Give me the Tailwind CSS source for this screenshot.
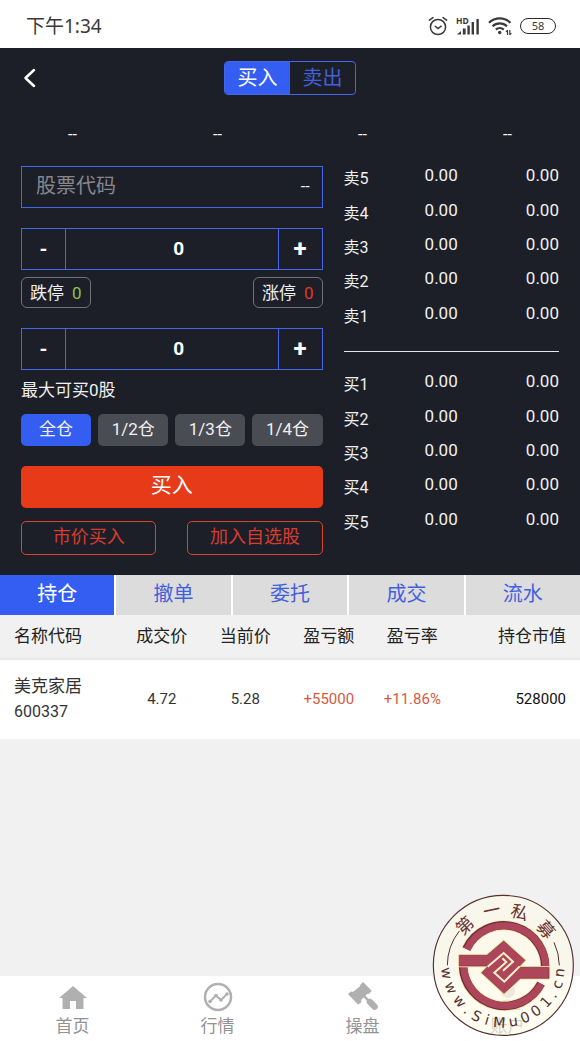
<!DOCTYPE html>
<html lang="zh-CN">
<head>
<meta charset="utf-8">
<meta name="viewport" content="width=device-width, initial-scale=1">
<title>买入</title>
<script src="https://cdn.jsdelivr.net/npm/@tailwindcss/browser@4"></script>
</head>
<body class="relative flex min-h-screen flex-col bg-[#f1f1f1] font-['Roboto','Noto_Sans_CJK_SC',sans-serif] text-[17px] text-[#333]">

<!-- Status bar -->
<header class="flex h-12 items-center justify-between bg-white pt-1 pr-6 pl-[26px] font-['Noto_Sans','Noto_Sans_CJK_SC',sans-serif] text-[#3a3a3a]">
  <span class="text-[19px]">下午1:34</span>
  <div class="flex items-center gap-2">
    <svg class="size-5" viewBox="0 0 20 20" fill="none" stroke="#3a3a3a" stroke-width="1.5" stroke-linecap="round" aria-hidden="true">
      <circle cx="10" cy="11" r="7.6"/><path d="M7.2 10.2 10 12.6l3.2-2.4M1.4 4.2 5 1.6M15 1.6l3.6 2.6"/>
    </svg>
    <svg class="h-5 w-6" viewBox="0 0 24 20" fill="#3a3a3a" aria-hidden="true">
      <text x="0" y="7.5" font-size="8.5" font-weight="700">HD</text>
      <path d="M1 18.500l4-3.500v3.500zM6.800 12.500h2.800v6H6.800zM11.400 9.500h2.400v9h-2.400zM15.600 6h2.400v12.500h-2.400zM20.400 3h2.400v15.500h-2.400z"/>
    </svg>
    <svg class="h-5 w-6" viewBox="0 0 24 20" fill="none" stroke="#3a3a3a" stroke-width="2.200" aria-hidden="true">
      <path d="M1 6.800a15.500 15.500 0 0 1 21.500 0M4.500 10.300a10.500 10.500 0 0 1 14.500 0M7.800 13.600a6 6 0 0 1 8 0"/>
      <circle cx="11.700" cy="16.500" r="1.700" fill="#3a3a3a" stroke="none"/>
      <path d="M19.500 14v5m-1.500-3 1.500-2M21.800 19v-5m1.500 3-1.500 2" stroke-width="1.200"/>
    </svg>
    <span class="flex h-4 w-9 items-center justify-center rounded-full border border-[#2a2a2a] text-[11px]">58</span>
  </div>
</header>

<main class="flex flex-col">
  <section class="bg-[#1d1f28] pb-5 text-[#f0f0f0]">
    <div class="grid grid-cols-[1fr_auto_1fr] items-center px-[21px] pt-[13px]">
      <button type="button" aria-label="返回" class="flex size-6 items-center">
        <svg class="h-5 w-4" viewBox="0 0 16 20" fill="none" stroke="#fff" stroke-width="2.500" stroke-linecap="round" stroke-linejoin="round"><path d="M13 2 4.500 10l8.500 8"/></svg>
      </button>
      <div class="flex h-[34px] w-[132px] overflow-hidden rounded-[4px] border border-[#4466ea] text-xl">
        <button type="button" class="flex flex-1 items-center justify-center bg-[#345df2] pb-px text-white">买入</button>
        <button type="button" class="flex flex-1 items-center justify-center pb-px text-[#4360dc]">卖出</button>
      </div>
    </div>

    <div class="mt-5 grid h-10 grid-cols-4 items-center text-center text-base text-white">
      <span>--</span><span>--</span><span>--</span><span>--</span>
    </div>

    <div class="mt-[3px] grid grid-cols-[minmax(0,7fr)_minmax(0,5fr)] gap-[21px] px-[21px]">
      <form class="min-w-0 pt-2">
        <label class="flex h-[42px] items-center border border-[#4466ea] pr-3 pl-[14px]">
          <input type="text" aria-label="股票代码" placeholder="股票代码" class="w-0 min-w-0 flex-1 bg-transparent pb-[2px] text-xl outline-none placeholder:text-[#85878c]">
          <span class="text-base">--</span>
        </label>

        <div class="mt-5 flex h-[42px] border border-[#4466ea] font-bold text-white">
          <button type="button" aria-label="减少价格" class="w-11 shrink-0 border-r border-[#4466ea] text-xl">-</button>
          <input type="text" inputmode="decimal" aria-label="价格" value="0" class="w-0 min-w-0 flex-1 bg-transparent pl-[14px] text-center text-[19px] outline-none">
          <button type="button" aria-label="增加价格" class="w-11 shrink-0 border-l border-[#4466ea] text-2xl">+</button>
        </div>

        <div class="mt-[7px] flex justify-between">
          <button type="button" class="flex h-[31px] items-center gap-2 rounded-md border border-[#71737b] px-2 pt-[2px]"><span>跌停</span><span class="text-[#8bc34a]">0</span></button>
          <button type="button" class="flex h-[31px] items-center gap-2 rounded-md border border-[#71737b] px-2 pt-[2px]"><span>涨停</span><span class="text-[#e03a2a]">0</span></button>
        </div>

        <div class="mt-5 flex h-[42px] border border-[#4466ea] font-bold text-white">
          <button type="button" aria-label="减少数量" class="w-11 shrink-0 border-r border-[#4466ea] text-xl">-</button>
          <input type="text" inputmode="numeric" aria-label="数量" value="0" class="w-0 min-w-0 flex-1 bg-transparent pl-[14px] text-center text-[19px] outline-none">
          <button type="button" aria-label="增加数量" class="w-11 shrink-0 border-l border-[#4466ea] text-2xl">+</button>
        </div>

        <p class="mt-2 leading-6">最大可买0股</p>

        <div class="mt-3 grid h-8 grid-cols-4 gap-[7px]">
          <button type="button" class="rounded-[5px] bg-[#345df2]">全仓</button>
          <button type="button" class="rounded-[5px] bg-[#4a4c54]">1/2仓</button>
          <button type="button" class="rounded-[5px] bg-[#4a4c54]">1/3仓</button>
          <button type="button" class="rounded-[5px] bg-[#4a4c54]">1/4仓</button>
        </div>

        <button type="submit" class="mt-5 h-[42px] w-full rounded-[5px] bg-[#e63a19] pb-[2px] text-[21px] text-white">买入</button>

        <div class="mt-[13px] grid h-[34px] grid-cols-2 gap-[31px] text-lg leading-6 text-[#d63c30]">
          <button type="button" class="rounded-[5px] border border-[#d9432f] pb-[2px]">市价买入</button>
          <button type="button" class="rounded-[5px] border border-[#d9432f] pb-[2px]">加入自选股</button>
        </div>
      </form>

      <div>
        <table class="h-[172px] w-full table-fixed text-right leading-5">
          <tbody>
            <tr><th class="w-[20%] pt-2 text-left text-base font-normal">卖5</th><td class="w-[33%]">0.00</td><td>0.00</td></tr>
            <tr><th class="pt-2 text-left text-base font-normal">卖4</th><td>0.00</td><td>0.00</td></tr>
            <tr><th class="pt-2 text-left text-base font-normal">卖3</th><td>0.00</td><td>0.00</td></tr>
            <tr><th class="pt-2 text-left text-base font-normal">卖2</th><td>0.00</td><td>0.00</td></tr>
            <tr><th class="pt-2 text-left text-base font-normal">卖1</th><td>0.00</td><td>0.00</td></tr>
          </tbody>
        </table>
        <hr class="mt-[21px] mb-3 border-t border-[#e4e4ee]">
        <table class="h-[172px] w-full table-fixed text-right leading-5">
          <tbody>
            <tr><th class="w-[20%] pt-2 text-left text-base font-normal">买1</th><td class="w-[33%]">0.00</td><td>0.00</td></tr>
            <tr><th class="pt-2 text-left text-base font-normal">买2</th><td>0.00</td><td>0.00</td></tr>
            <tr><th class="pt-2 text-left text-base font-normal">买3</th><td>0.00</td><td>0.00</td></tr>
            <tr><th class="pt-2 text-left text-base font-normal">买4</th><td>0.00</td><td>0.00</td></tr>
            <tr><th class="pt-2 text-left text-base font-normal">买5</th><td>0.00</td><td>0.00</td></tr>
          </tbody>
        </table>
      </div>
    </div>
  </section>

  <div class="grid h-10 grid-cols-5 gap-[2px] bg-white text-xl text-[#4360dc]">
    <button type="button" class="bg-[#345df2] pb-[2px] text-white">持仓</button>
    <button type="button" class="bg-[#dcdcdc] pb-[2px]">撤单</button>
    <button type="button" class="bg-[#dcdcdc] pb-[2px]">委托</button>
    <button type="button" class="bg-[#dcdcdc] pb-[2px]">成交</button>
    <button type="button" class="bg-[#dcdcdc] pb-[2px]">流水</button>
  </div>

  <table class="w-full table-fixed text-center">
    <thead>
      <tr class="h-11 border-b-2 border-[#e9e9e9] text-[#222]">
        <th class="w-[20.7%] pl-[14px] text-left font-normal">名称代码</th>
        <th class="w-[14.4%] font-normal">成交价</th>
        <th class="w-[14.4%] font-normal">当前价</th>
        <th class="w-[14.4%] font-normal">盈亏额</th>
        <th class="w-[14.4%] font-normal">盈亏率</th>
        <th class="pr-[14px] text-right font-normal">持仓市值</th>
      </tr>
    </thead>
    <tbody>
      <tr class="h-20 bg-white text-[15px]">
        <td class="pb-1 pl-[14px] text-left leading-7"><span class="block text-[17px]">美克家居</span><span class="block text-base leading-6">600337</span></td>
        <td>4.72</td>
        <td>5.28</td>
        <td class="text-[#d9583f]">+55000</td>
        <td class="text-[#d9583f]">+11.86%</td>
        <td class="pr-[14px] text-right text-[#111]">528000</td>
      </tr>
    </tbody>
  </table>
</main>

<!-- Bottom navigation -->
<nav class="mt-auto grid h-[65px] grid-cols-4 bg-white text-[#929292]">
  <a href="#home" class="flex flex-col items-center gap-[2px] pt-[6px]">
    <svg class="size-[30px]" viewBox="0 0 30 30" fill="#b0b0b0" aria-hidden="true"><path d="M15 4 29 16h-3.500v11H18v-8h-6v8H4.500V16H1z"/></svg>
    <span class="leading-6">首页</span>
  </a>
  <a href="#market" class="flex flex-col items-center gap-[2px] pt-[6px]">
    <svg class="size-[30px]" viewBox="0 0 30 30" fill="none" stroke="#b0b0b0" stroke-width="2" stroke-linecap="round" stroke-linejoin="round" aria-hidden="true"><circle cx="15" cy="15" r="13" stroke-width="2.500"/><path d="m7 19.500 6-6 5 4.500 6-6"/><g fill="#b0b0b0" stroke="none"><circle cx="7" cy="19.500" r="1.800"/><circle cx="13" cy="13.500" r="1.800"/><circle cx="18" cy="18" r="1.800"/><circle cx="24" cy="12" r="1.800"/></g></svg>
    <span class="leading-6">行情</span>
  </a>
  <a href="#trade" class="flex flex-col items-center gap-[2px] pt-[6px]">
    <svg class="size-[30px]" viewBox="1 1 31 31" fill="#b0b0b0" stroke="#b0b0b0" stroke-linecap="round" stroke-linejoin="round" aria-hidden="true"><path d="M2 13.500 4.500 11.500l2 .5 7.500-6 .5-2L16.500 2l8 8-2 2.500-2 .2-6.500 6.300v2.500l-2.500 2z" stroke-width="1.500"/><path d="m18 16 5 5" stroke-width="2.500" fill="none"/><path d="m23.500 21.500 5 5" stroke-width="6.500" fill="none"/></svg>
    <span class="leading-6">操盘</span>
  </a>
  <a href="#account" class="flex flex-col items-center gap-[2px] pt-[6px]">
    <svg class="size-[30px]" viewBox="0 0 30 30" fill="#a0a0a0" aria-hidden="true"><circle cx="15" cy="9" r="7"/><path d="M3 28c0-14 24-14 24 0z"/></svg>
    <span class="leading-6">账户</span>
  </a>
</nav>

<!-- Site seal laid over the page corner -->
<svg class="pointer-events-none absolute right-[5px] bottom-[4px] size-[143px]" viewBox="21 27 429 429" role="img" aria-label="第一私募 www.SiMu001.cn">
  <circle cx="235" cy="241" r="210" fill="#fffbea" fill-opacity=".6" stroke="#54302e" stroke-width="3.500"/>
  <circle cx="236" cy="244" r="135" fill="#fffaea" fill-opacity=".5"/>
  <g fill="none" stroke="#54302e" stroke-width="3">
    <path d="M67 241A168 168 0 0 1 103 138M403 241A168 168 0 0 0 387 172"/>
  </g>
  <g stroke="#f6e5a8" stroke-width="30" fill="none"><path d="M124 192A124 124 0 0 1 359 262M348 296A124 124 0 0 1 114 243"/></g>
  <g stroke="#6d2c3a" stroke-width="25" fill="none"><path d="M124 192A124 124 0 0 1 359 262M348 296A124 124 0 0 1 114 243"/></g>
  <g stroke="#ae465b" stroke-width="21" fill="none"><path d="M126 193A124 124 0 0 1 361 262M349 297A124 124 0 0 1 116 243"/></g>
  <path d="M103 211H186L236 168 300 226 280 247H372V280H286L237 325 170 263 190 243H103Z" fill="none" stroke="#f6e5a8" stroke-width="8"/>
  <path d="M103 211H186L236 168 300 226 280 247H372V280H286L237 325 170 263 190 243H103Z" fill="#ae465b" stroke="#7a3040" stroke-width="2"/>
  <g fill="none" stroke="#fff0c5" stroke-width="6"><path d="M188 245 236 204 264 230 234 257M284 244 238 290 208 263 244 231 232 220"/></g>
  <g fill="#6b3028" font-family="'Noto Sans CJK SC', sans-serif" font-size="52" text-anchor="middle">
    <text transform="translate(119 121) rotate(-43)" y="19">第</text>
    <text transform="translate(200 76) rotate(-12)" y="19">一</text>
    <text transform="translate(284 82) rotate(17)" y="19">私</text>
    <text transform="translate(363 133) rotate(49)" y="19">募</text>
  </g>
  <g fill="#54302e" font-family="'DejaVu Sans', sans-serif" font-size="43" text-anchor="middle">
    <text transform="translate(62 265) rotate(82)" y="12">w</text>
    <text transform="translate(76 309) rotate(67)" y="12">w</text>
    <text transform="translate(102 350) rotate(50)" y="12">w</text>
    <text transform="translate(125 376) rotate(38)" y="12">.</text>
    <text transform="translate(154 394) rotate(27)" y="14">S</text>
    <text transform="translate(186 405) rotate(17)" y="14">i</text>
    <text transform="translate(223 413) rotate(4)" y="14">M</text>
    <text transform="translate(265 411) rotate(-9)" y="12">u</text>
    <text transform="translate(301 398) rotate(-22)" y="14">0</text>
    <text transform="translate(333 378) rotate(-35)" y="14">0</text>
    <text transform="translate(363 351) rotate(-48)" y="14">1</text>
    <text transform="translate(384 330) rotate(-59)" y="12">.</text>
    <text transform="translate(399 299) rotate(-70)" y="12">c</text>
    <text transform="translate(405 263) rotate(-83)" y="12">n</text>
  </g>
</svg>
</body>
</html>
